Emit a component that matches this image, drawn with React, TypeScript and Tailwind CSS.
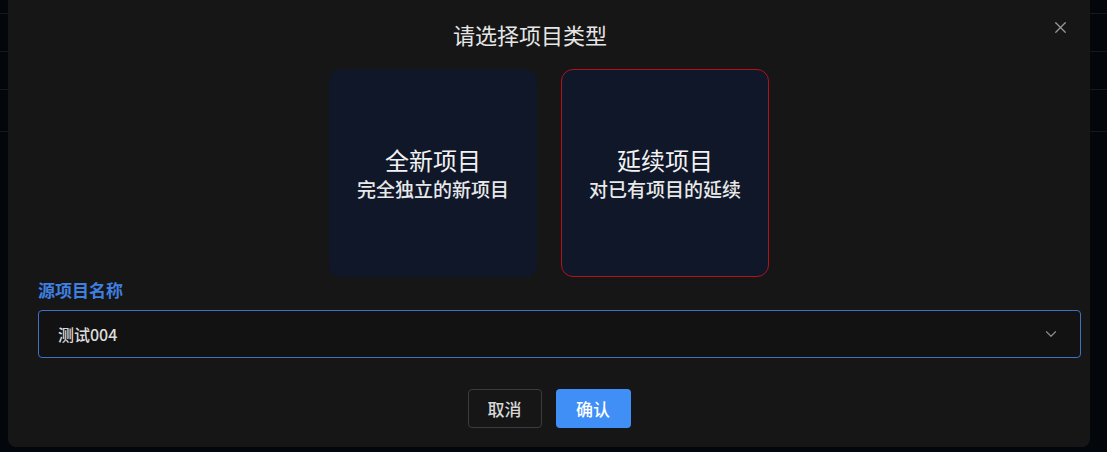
import { X, ChevronDown } from "lucide-react";

const FONT = { fontFamily: '"Noto Sans CJK SC", "Noto Sans", sans-serif' };

interface TypeCardProps {
  title: string;
  desc: string;
  active?: boolean;
}

function TypeCard({ title, desc, active }: TypeCardProps) {
  return (
    <div
      className={
        active
          ? "flex h-[208px] w-[208px] flex-col items-center justify-center rounded-[12px] border-[1.5px] border-[#b4121b] bg-[#0f1729]"
          : "flex h-[208px] w-[208px] flex-col items-center justify-center rounded-[12px] border-[1.5px] border-transparent bg-[#0f1729]"
      }
    >
      <div className="text-[24px] leading-[28px] text-[#f2f2f2]">{title}</div>
      <div className="mt-[3px] text-[19px] font-medium leading-[24px] text-[#e8e8e8]">{desc}</div>
    </div>
  );
}

export default function App() {
  return (
    <div className="relative h-[452px] w-full overflow-hidden bg-[#03060b]" style={FONT}>
      {/* backdrop lines behind the modal */}
      <div className="absolute left-0 top-[13px] h-px w-full bg-[#15181d]" />
      <div className="absolute left-0 top-[51px] h-px w-full bg-[#15181d]" />
      <div className="absolute left-0 top-[89px] h-px w-full bg-[#15181d]" />
      <div className="absolute left-0 top-[131px] h-px w-full bg-[#15181d]" />

      <div className="relative ml-[8px] mt-[-6px] flex h-[453px] w-[1082px] flex-col rounded-[8px] bg-[#161616]">
        <div className="pr-[38px] pt-[25px] text-center text-[22px] leading-[30px] text-[#e6e6e6]">请选择项目类型</div>
        <button className="absolute right-[20px] top-[24px] text-[#9a9a9a]">
          <X size={19} strokeWidth={1.5} />
        </button>

        <div className="mt-[20px] flex justify-center gap-[24px]">
          <TypeCard title="全新项目" desc="完全独立的新项目" />
          <TypeCard title="延续项目" desc="对已有项目的延续" active />
        </div>

        <div className="pl-[30px] pr-[9px]">
          <div className="mt-[1px] text-[17px] font-semibold leading-[24px] text-[#3f7fe0]">源项目名称</div>
          <div className="mt-[8px] flex h-[48px] items-center justify-between rounded-[4px] border-[1.5px] border-[#3f70c8] bg-[#121212] pl-[19px] pr-[20px]">
            <span className="text-[16px] font-medium text-[#dcdcdc]">测试004</span>
            <ChevronDown size={18} strokeWidth={1.6} className="text-[#8a8a8a]" />
          </div>
        </div>

        <div className="mt-[31px] flex justify-center gap-[14px]">
          <button className="h-[39px] w-[74px] rounded-[4px] border-[1.5px] border-[#3c3c3c] text-[17px] font-medium text-[#d8d8d8]">
            取消
          </button>
          <button className="h-[39px] w-[75px] rounded-[4px] bg-[#3f8ff7] text-[17px] font-medium text-white">
            确认
          </button>
        </div>
      </div>
    </div>
  );
}
